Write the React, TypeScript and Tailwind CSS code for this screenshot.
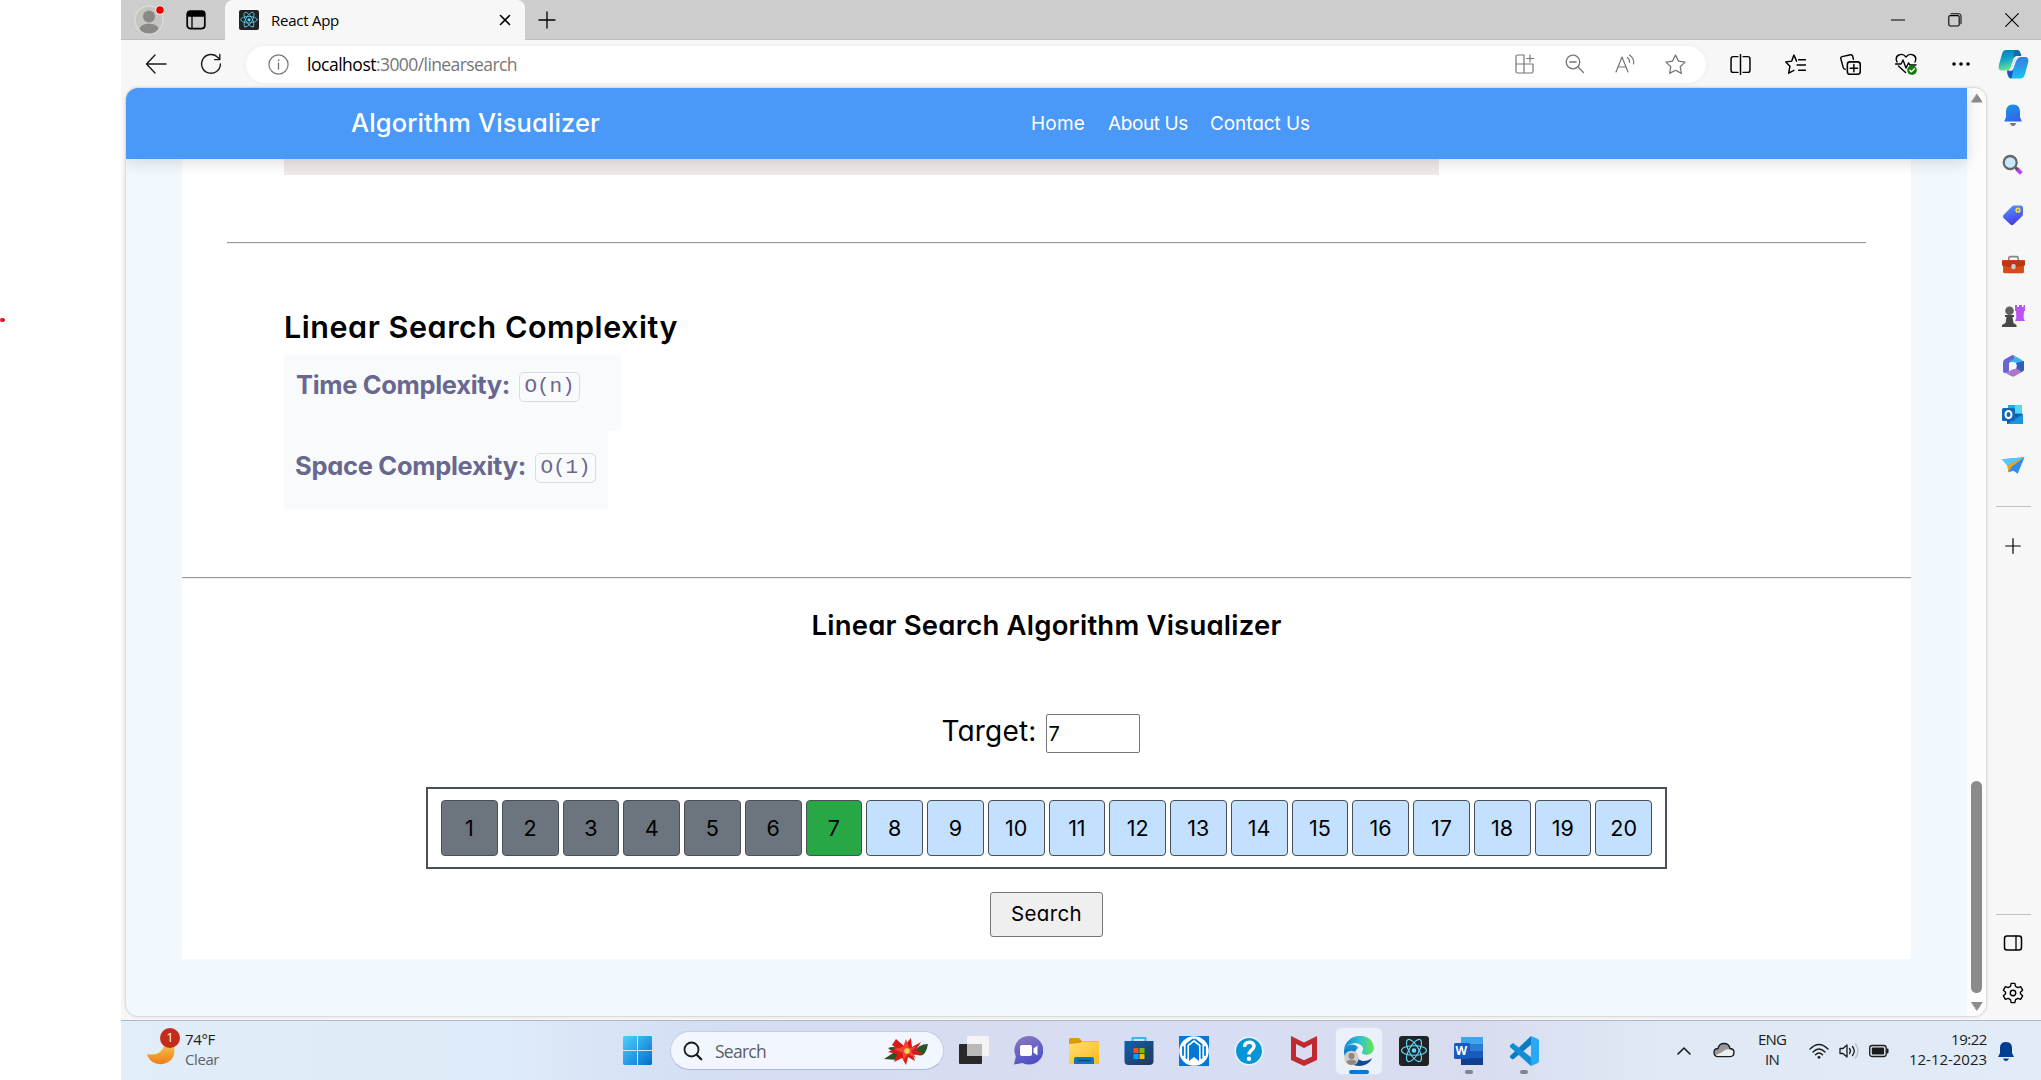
import { useLayoutEffect, useRef, type ReactNode } from "react";

/* Single line of text whose tracking is adjusted so that it fills `w` pixels. */
function Fit({ w, className = "", children }: { w: number; className?: string; children: string }) {
  const ref = useRef<HTMLSpanElement>(null);
  useLayoutEffect(() => {
    const el = ref.current;
    if (!el) return;
    el.style.letterSpacing = "0px";
    const natural = el.getBoundingClientRect().width;
    el.style.letterSpacing = `${(w - natural) / children.length}px`;
  }, [w, children]);
  return (
    <span ref={ref} className={`inline-block w-fit whitespace-pre ${className}`}>
      {children}
    </span>
  );
}

const Svg = ({ s = 20, vb = 20, className = "", children }: { s?: number; vb?: number; className?: string; children: ReactNode }) => (
  <svg width={s} height={s} viewBox={`0 0 ${vb} ${vb}`} fill="none" stroke="currentColor" strokeWidth="1.3" strokeLinecap="round" strokeLinejoin="round" className={`block shrink-0 ${className}`}>
    {children}
  </svg>
);

const Slot = ({ className, children }: { className: string; children: ReactNode }) => (
  <div className={`flex shrink-0 items-center justify-center ${className}`}>{children}</div>
);

const ReactLogo = ({ s }: { s: number }) => (
  <Svg s={s} vb={30} className="text-[#61dafb]">
    <rect width="30" height="30" rx="3" fill="#202224" stroke="none" />
    <g strokeWidth="1.1">
      <ellipse cx="15" cy="14.5" rx="12.5" ry="4.8" />
      <ellipse cx="15" cy="14.5" rx="12.5" ry="4.8" transform="rotate(60 15 14.5)" />
      <ellipse cx="15" cy="14.5" rx="12.5" ry="4.8" transform="rotate(120 15 14.5)" />
    </g>
    <circle cx="15" cy="14.5" r="2.3" fill="currentColor" stroke="none" />
  </Svg>
);

function TabStrip() {
  return (
    <div className="flex h-10 bg-[#cdcdcd] text-black shadow-[inset_0_-1px_0_#bdbdbd]">
      <div className="flex w-[104px] items-center">
        <Svg s={30} vb={30} className="ml-[13px]">
          <g stroke="none">
            <circle cx="15" cy="15" r="14" fill="#c5c4c0" stroke="#dedcd8" />
            <circle cx="15" cy="11.5" r="6" fill="#8b8985" />
            <path d="M5.5 24c1-7 18-7 19 0-4 6-15 6-19 0z" fill="#8b8985" />
            <circle cx="26" cy="5" r="4.6" fill="#fff" />
            <circle cx="26" cy="5" r="3.8" fill="#e60000" />
          </g>
        </Svg>
        <Svg s={20} className="ml-[22px]">
          <rect x="1.2" y="1.2" width="17.6" height="17.4" rx="3" strokeWidth="1.7" />
          <path d="M2 2h16v4H2z" fill="currentColor" />
          <path d="M6 6v12" />
        </Svg>
      </div>
      <div className="flex w-[300px] items-center rounded-t-lg bg-[#f7f7f7] pl-[14px]">
        <ReactLogo s={20} />
        <Fit w={68} className="ml-3 font-['Open_Sans'] text-[15px] leading-5">React App</Fit>
        <Svg s={12} vb={12} className="ml-auto mr-[14px]"><path d="M1.5 1.5l9 9m0-9l-9 9" strokeWidth="1.6" /></Svg>
      </div>
      <Svg s={18} vb={18} className="ml-[13px] mt-[11px]"><path d="M9 1v16M1 9h16" /></Svg>
      <div className="ml-auto mr-[1px] flex items-center">
        <Slot className="w-[57px]"><Svg s={14} vb={14}><path d="M0 7h14" strokeLinecap="butt" strokeWidth="1" /></Svg></Slot>
        <Slot className="w-[57px]"><Svg s={14} vb={14}><rect x=".8" y="2.6" width="10.4" height="10.4" rx="1.5" strokeWidth="1.1" /><path d="M3 .8h8q2 0 2 2v8" strokeWidth="1" /></Svg></Slot>
        <Slot className="w-[57px]"><Svg s={14} vb={14}><path d="M.7.7l12.6 12.6m0-12.6L.7 13.3" strokeWidth="1.1" /></Svg></Slot>
      </div>
    </div>
  );
}

const STAR = "M10 1l2.8 5.8 6.3.9-4.6 4.4 1.1 6.4L10 15.5l-5.6 3 1.1-6.4L.9 7.7l6.3-.9z";

function Toolbar() {
  return (
    <div className="flex h-12 items-center bg-[#f7f7f7] text-[#1b1b1b]">
      <Slot className="ml-[24px] w-[22px]"><Svg s={22} vb={22}><path d="M21 11H1.5m8.5-9l-8.5 9 8.5 9" strokeWidth="1.4" /></Svg></Slot>
      <Slot className="ml-[33px] w-[22px]"><Svg s={22} vb={22}><path d="M20.4 11A9.4 9.4 0 1 1 18 4.6l1.8 1.9M19.8 1.4v5.2h-5.2" strokeWidth="1.4" /></Svg></Slot>
      <div className="ml-[24px] flex h-[37px] w-[1460px] items-center rounded-full bg-white pl-[22px] text-[#767676] shadow-[0_0_5px_rgba(0,0,0,.06)]">
        <Svg s={21} vb={21}><circle cx="10.5" cy="10.5" r="9.6" strokeWidth="1.2" /><path d="M10.5 9v6" /><circle cx="10.5" cy="6.2" r=".6" fill="currentColor" strokeWidth=".5" /></Svg>
        <div className="ml-[18px] flex font-['Open_Sans'] text-[17.5px] leading-6">
          <Fit w={69} className="text-black">localhost</Fit>
          <Fit w={141}>:3000/linearsearch</Fit>
        </div>
        <div className="ml-auto mr-[6px] flex">
          <Slot className="w-[50px]"><Svg s={20}><path d="M1 2.5Q1 1 2.500 1H9v9H1zM1 10h8v9H2.500Q1 19 1 17.500zM9 10h9v7.500q0 1.500-1.500 1.500H9zM15 1v7m-3.500-3.500h7" strokeWidth="1.2" /></Svg></Slot>
          <Slot className="w-[50px]"><Svg s={20}><circle cx="8" cy="8" r="6.800" /><path d="M13 13l5.500 5.500M4.800 8h6.400" /></Svg></Slot>
          <Slot className="w-[50px]"><Svg s={20}><path d="M1 18L7 3l6 15M3 13h8M12.500 3.500q2.500 2 2 5M14.500 1q5 3.500 4 9" strokeWidth="1.2" /></Svg></Slot>
          <Slot className="w-[50px]"><Svg s={21}><path d={STAR} strokeWidth="1.200" /></Svg></Slot>
        </div>
      </div>
      <div className="ml-[7px] flex text-black">
        <Slot className="w-[55px]"><Svg s={21}><path d="M7.500 2.500H3q-2 0-2 2v11q0 2 2 2h4.500M12.500 2.500H17q2 0 2 2v11q0 2-2 2h-4.500M10 .500v19" strokeWidth="1.400" /></Svg></Slot>
        <Slot className="w-[55px]"><Svg s={21}><path d="M11 6.800L8.500 1 6.300 6.800l-5.600.8 4 4-1.200 6.700 5-2.800M13 5.500h6.500M11.500 10.500h8M13 15.500h6.500" strokeWidth="1.400" /></Svg></Slot>
        <Slot className="w-[55px]"><Svg s={21}><rect x="7" y="7.500" width="12.300" height="11.800" rx="2.500" strokeWidth="1.500" /><path d="M13.200 10v7M9.700 13.500h7M5 14.500q-1.500 0-2-1.800L.8 4.500Q.4 3 2 2.500L10 .800q1.500-.3 2 1.200l.8 3" strokeWidth="1.400" /></Svg></Slot>
        <Slot className="w-[55px]"><Svg s={22} vb={22}><path d="M2 9C-1 2 7-1 11 4c4-5 12-2 9 5M.500 11H6l2-4 3 8 2.500-5 1.500 2h6M3.500 13l7 6.500" strokeWidth="1.400" /><circle cx="17" cy="17.200" r="4.800" fill="#107c10" stroke="none" /><path d="M14.800 17.300l1.600 1.500 3-3" stroke="#fff" /></Svg></Slot>
        <Slot className="w-[55px]"><Svg s={20}><g fill="currentColor" stroke="none"><circle cx="3" cy="10" r="1.800" /><circle cx="10" cy="10" r="1.800" /><circle cx="17" cy="10" r="1.800" /></g></Svg></Slot>
      </div>
      <Svg s={31} vb={31} className="ml-auto mr-[12px]">
        <defs>
          <linearGradient id="cpA" x2=".3" y2="1"><stop stopColor="#0078bd" /><stop offset=".5" stopColor="#10a6c9" /><stop offset="1" stopColor="#70e28c" /></linearGradient>
          <linearGradient id="cpB" x2=".2" y2="1"><stop stopColor="#3d72df" /><stop offset="1" stopColor="#1bbcf2" /></linearGradient>
        </defs>
        <g stroke="none">
          <path d="M8 1h11q3 0 4 6h-5q-2 0-2.600 3l-3 9q-1 2.500-4 2.500H4q-4.500 0-3-6L4 5Q5 1 8 1z" fill="url(#cpA)" />
          <path d="M16 1h3.500q2.500 0 4 6h-5q-2 0-3 3z" fill="#126ea5" />
          <path d="M22.500 8H27q4.500 0 3 6l-3 11q-1 4.500-5 4.500H13q-3 0-4-6 3 0 4-3l4-10q1-2.500 5.500-2.500z" fill="url(#cpB)" />
          <path d="M9 21.500h6l-1.500 8q-3.500 0-4.500-8z" fill="#1557b5" />
          <path d="M19 8.500q3-.5 3.500-.5-3.500 1-4.500 4l-2.500 7q-1 3-4.500 3.500 2-1 3-4l3-7.500q.7-2 2-2.500z" fill="#fff" />
        </g>
      </Svg>
    </div>
  );
}

const HR = ({ className }: { className: string }) => <div className={`h-[2px] border-t border-t-[#9a9a9a] bg-[#eee] ${className}`} />;

function Complexity({ label, value, w, className }: { label: string; value: string; w: number; className: string }) {
  return (
    <div className={`flex items-start bg-[#f9fafc] text-[#68688f] ${className}`}>
      <Fit w={w} className="font-['Inter'] text-[25.5px] font-bold leading-[30px] [font-feature-settings:'cv11']">{label}</Fit>
      <div className="ml-[9px] mt-[2px] flex h-[30px] w-[61px] items-center justify-center rounded-[5px] border border-[#d3dce8] font-['Liberation_Mono'] text-[21px] leading-[28px]">
        <Fit w={50}>{value}</Fit>
      </div>
    </div>
  );
}

const VALUES = Array.from({ length: 20 }, (_, i) => i + 1);
const TARGET = 7;

function Page() {
  return (
    <div className="flex h-[928px] w-[1860px] overflow-hidden rounded-xl bg-[#f1f9ff] shadow-[0_0_3px_rgba(0,0,0,.3)]">
      <div className="flex w-[1841px] flex-col font-['Inter'] [font-feature-settings:'cv11']">
        <header className="relative flex h-[71px] shrink-0 items-start bg-[#4a98f8] text-white shadow-[0_4px_14px_rgba(0,0,0,.13)]">
          <Fit w={249} className="ml-[225px] mt-[19px] text-[25.5px] font-medium leading-8">Algorithm Visualizer</Fit>
          <nav className="ml-[431px] mt-[24px] flex text-[19px] leading-6">
            <Fit w={54}>Home</Fit>
            <Fit w={80} className="ml-[23px]">About Us</Fit>
            <Fit w={100} className="ml-[22px]">Contact Us</Fit>
          </nav>
        </header>
        <main className="mx-[56px] flex h-[800px] flex-col bg-white text-black">
          <div className="ml-[102px] h-4 w-[1155px] shrink-0 bg-[#f0e9e9]" />
          <HR className="mx-[45px] mt-[67px]" />
          <Fit w={394} className="ml-[102px] mt-[63px] text-[30.5px] font-semibold leading-[40px]">Linear Search Complexity</Fit>
          <div className="ml-[102px] mt-[8px]">
            <Complexity label="Time Complexity:" value="O(n)" w={214} className="h-[76px] w-[337px] pl-[12px] pt-[15px]" />
            <Complexity label="Space Complexity:" value="O(1)" w={231} className="h-[78px] w-[324px] pl-[11px] pt-[20px]" />
          </div>
          <HR className="mt-[68px]" />
          <div className="flex flex-col items-center">
            <Fit w={470} className="mt-[26px] text-[27.5px] font-semibold leading-[40px]">Linear Search Algorithm Visualizer</Fit>
            <div className="mr-[12px] mt-[69px] flex h-[39px] w-[198px]">
              <Fit w={95} className="text-[28px] leading-[34px]">Target:</Fit>
              <div className="ml-auto flex w-[94px] items-center rounded-[2px] border border-[#767676] pl-[2px] text-[20px]">7</div>
            </div>
            <div className="mt-[34px] flex h-[82px] w-[1241px] items-start gap-[4px] border-2 border-[#495057] px-[13px] pt-[11px]">
              {VALUES.map((n) => (
                <div
                  key={n}
                  className={`flex h-[56px] flex-1 items-center justify-center rounded-[4px] border border-[#495057] pt-px text-[21.5px] ${n < TARGET ? "bg-[#6c757d]" : n === TARGET ? "bg-[#28a745]" : "bg-[#c3e0ff]"}`}
                >
                  {n}
                </div>
              ))}
            </div>
            <button className="mt-[23px] h-[45px] w-[113px] rounded-[3px] border border-[#767676] bg-[#efefef] text-[20.5px]"><Fit w={71}>Search</Fit></button>
          </div>
        </main>
      </div>
      <div className="flex w-[19px] flex-col items-center bg-[#fcfcfc]">
        <Svg s={12} vb={12} className="mt-[4px] text-[#8b8b8b]"><path d="M6 2.500L11 10H1z" fill="currentColor" strokeWidth="1" /></Svg>
        <div className="mt-[677px] h-[212px] w-[11px] rounded-full bg-[#8b8b8b]" />
        <Svg s={12} vb={12} className="mt-[8px] text-[#8b8b8b]"><path d="M6 9L11 1.500H1z" fill="currentColor" strokeWidth="1" /></Svg>
      </div>
    </div>
  );
}

function Sidebar() {
  return (
    <aside className="flex w-[54px] flex-col items-center text-black">
      <div className="flex flex-col pt-[2px]">
        <Slot className="h-[50px]"><Svg s={22} vb={22}><defs><linearGradient id="sbBell" x2=".6" y2="1"><stop stopColor="#159be2" /><stop offset="1" stopColor="#3165ed" /></linearGradient></defs><g stroke="none"><path d="M8 19h6q-.500 3-3 3t-3-3z" fill="#777" /><path d="M11 .5c5 0 7 3.500 7 7.500v5l1.800 4.500H2.200L4 13V8C4 4 6 .5 11 .5z" fill="url(#sbBell)" /></g></Svg></Slot>
        <Slot className="h-[50px]"><Svg s={22} vb={22}><path d="M14.500 14.500l4.800 4.800" stroke="#c33cf2" strokeWidth="4" strokeLinecap="butt" /><path d="M12.500 12.500l2.500 2.500" stroke="#555" strokeWidth="2.500" /><circle cx="8.200" cy="8.500" r="6.500" fill="#c9e9fb" stroke="#686868" strokeWidth="2.300" /></Svg></Slot>
        <Slot className="h-[50px]"><Svg s={22} vb={22}><defs><linearGradient id="tag" x2=".3" y2="1"><stop stopColor="#539bff" /><stop offset="1" stopColor="#4740e8" /></linearGradient></defs><path d="M12 1.500h6.500q2.500 0 2.500 2.500v6q0 1.500-1.200 2.600L11.500 20.500q-1.500 1.300-3 0L1.500 14q-1.300-1.500 0-3L9.800 2.500Q11 1.500 12 1.500z" fill="url(#tag)" stroke="none" /><circle cx="16" cy="6.200" r="1.900" fill="#6c8bdc" stroke="#ffdc36" strokeWidth="1.500" /></Svg></Slot>
        <Slot className="h-[50px]"><Svg s={23} vb={22}><path d="M6.500 6V4q0-1.500 1.500-1.500h6q1.500 0 1.500 1.500v2" stroke="#858585" strokeWidth="1.500" /><g stroke="none"><rect x="1" y="6" width="20" height="12.500" rx="1.500" fill="#d84b18" /><path d="M0 6h22v5q-11 3-22 0z" fill="#bd3513" /><rect x="9" y="9.500" width="4" height="5" rx="1.500" fill="#c9c9c9" /></g></Svg></Slot>
        <Slot className="h-[50px]"><Svg s={23} vb={23}><g stroke="none"><path d="M13 1h2v2h2V1h3v2h1.500V1H23v6h-1l-.5 7 1.500 3H13l1.300-3L14 7h-1z" fill="#bb54f1" /><circle cx="7.500" cy="6.800" r="4.300" fill="#5f5f5f" /><path d="M3 11h9v2h-1.500l1 6 3 2v2H0v-2l3.500-2 1-6H3z" fill="#484848" /></g></Svg></Slot>
        <Slot className="h-[50px]"><Svg s={23} vb={23}><g stroke="none"><path d="M11 .8L4 4.500Q1 6 1 9v9q2 2.500 6-.5V9l6.500-4z" fill="#6a64d3" /><path d="M11 .8l8.500 5Q22 7 22 10v5l-7-1.500V9L7 7.500 13.500 4z" fill="#3bb5ea" /><path d="M22 10v5q0 2-2 3l-8 4.500q-1.500.5-4-1L2 18q3 1 5.500-1L15 13V9z" fill="#ad76cd" /><path d="M22 7v9l-2 2-6-4V9z" fill="#315fbd" /><circle cx="11.300" cy="11.800" r="3.500" fill="#f7f7f7" /></g></Svg></Slot>
        <Slot className="h-[50px]"><Svg s={22} vb={22}><g stroke="none"><path d="M6 1h14v9H6z" fill="#27a8ea" /><path d="M13 1h7v8h-7z" fill="#50d9ff" /><path d="M5 10h16v10H5z" fill="#0a5da9" /><path d="M5 20L21 10v10z" fill="#1994dd" /><rect y="4" width="13" height="13" rx="1.500" fill="#1068b7" /></g><ellipse cx="6.500" cy="10.500" rx="3" ry="3.500" stroke="#fff" strokeWidth="2" /></Svg></Slot>
        <Slot className="h-[50px]"><Svg s={23} vb={22}><g stroke="none"><path d="M0 5l21.500-2L15 19l-4-3-5 1.500V12z" fill="#2d8ced" /><path d="M0 5l21.500-2L5.500 11z" fill="#56c9fb" /><path d="M21.500 3L5 11l1 6.500 3.500-5.500z" fill="#eca11f" /></g></Svg></Slot>
      </div>
      <div className="mt-[16px] h-px w-[35px] bg-[#c0c0c0]" />
      <Svg s={16} vb={16} className="mt-[31px]"><path d="M8 .7v14.600M.7 8h14.600" strokeWidth="1.200" /></Svg>
      <div className="mt-[360px] h-px w-[35px] bg-[#c0c0c0]" />
      <Svg s={20} className="mt-[18px]"><rect x="1.500" y="3" width="17" height="14" rx="2.500" strokeWidth="1.500" /><path d="M13 3v14" /></Svg>
      <Svg s={22} vb={24} className="mt-[29px]">
        <path d="M10 1.500h4l.8 3.200 2.500 1.400 3-1 2.200 3.800-2.400 2.200v1.800l2.400 2.200-2.200 3.800-3-1-2.500 1.400-.8 3.200h-4l-.8-3.200-2.500-1.400-3 1-2.200-3.800 2.400-2.200v-1.800L1.500 8.900l2.200-3.800 3 1 2.500-1.400z" strokeWidth="1.500" />
        <circle cx="12" cy="12" r="3" strokeWidth="1.500" />
      </Svg>
    </aside>
  );
}

const Pin = ({ children, dot = "" }: { children: ReactNode; dot?: string }) => (
  <div className="relative flex h-full w-[55px] shrink-0 items-center justify-center">
    {children}
    {dot && <span className={`absolute bottom-[6px] h-1 rounded-full ${dot}`} />}
  </div>
);

function Taskbar() {
  return (
    <footer className="flex h-[60px] items-center border-t border-[#b1b7c3] bg-[linear-gradient(90deg,#e1edf8,#deebf8_20%,#d4def5_30%,#d7dcf0_45%,#d7def4_55%,#d8dcee_70%,#dfe9f6_80%,#e1ecf8)] text-[#1b1b1b]">
      <div className="flex w-[502px] items-center">
        <div className="relative ml-[26px] h-[40px] w-[34px]">
          <Svg s={30} vb={30} className="mt-[9px]"><defs><linearGradient id="moon" x2="0" y2="1"><stop stopColor="#f6c548" /><stop offset="1" stopColor="#ee7d1d" /></linearGradient></defs><path d="M0 14q14 3 18-10 10-2 9.500 7C27 27 4 29 0 14z" fill="url(#moon)" stroke="none" /></Svg>
          <span className="absolute left-[13px] top-[-3px] flex size-5 items-center justify-center rounded-full bg-[#c42b1c] font-['Open_Sans'] text-[13px] text-white">1</span>
        </div>
        <div className="ml-[4px] flex flex-col pb-[4px] font-['Open_Sans'] text-[15px] leading-[20px]">
          <Fit w={30}>74°F</Fit>
          <Fit w={34} className="text-[#5d6269]">Clear</Fit>
        </div>
      </div>
      <Svg s={29} vb={29}><defs><linearGradient id="win" gradientUnits="userSpaceOnUse" x1="0" y1="0" x2="29" y2="29"><stop stopColor="#4fd0fb" /><stop offset="1" stopColor="#006fce" /></linearGradient></defs><path d="M1 0h13v14H0V1zM15 0h13l1 1v13H15zM0 15h14v14H1l-1-1zM15 15h14v13l-1 1H15z" fill="url(#win)" stroke="none" /></Svg>
      <div className="ml-[18px] flex h-[39px] w-[274px] items-center rounded-full border border-[#c4cde2] border-b-[#aeb8ce] bg-[#f2f6fe] pl-[12px]">
        <Svg s={20}><circle cx="8.500" cy="8.500" r="7" strokeWidth="1.800" /><path d="M13.700 13.700l4.500 4.500" strokeWidth="2.300" /></Svg>
        <Fit w={51} className="ml-[12px] font-['Open_Sans'] text-[17.5px] leading-6 text-[#5c5f66]">Search</Fit>
        <svg width="44" height="28" viewBox="0 0 44 28" className="ml-auto mr-[15px] block">
          <path d="M0 22l12-8 10 3-8 6zM4 11q8-3 14 3-8 3-14-3zM44 7q-10 0-14 9 11 8 14-9z" fill="#2c5228" />
          <path d="M12 2l8 7 7-8 1 9 9-5-5 8 7 4-10 1 2 6-7-4-2 8-4-7-8 4 3-8-9-2 8-4-4-3z" fill="#d51c18" />
          <path d="M22 2l3 9 8-2-6 5 5 7-8-4-5 7v-8l-9-4 9-2z" fill="#fa4436" />
          <circle cx="23" cy="14" r="2.800" fill="#e7dc4c" />
        </svg>
      </div>
      <div className="ml-[2px] flex h-full">
        <Pin><Svg s={30} vb={30}><g stroke="none"><rect y="8" width="23" height="20" rx="1" fill="#292929" /><rect x="8" y="0" width="22" height="20" rx="1" fill="#f4f4f4" /><path d="M8 8h15v12H8z" fill="#b9b9b9" /></g></Svg></Pin>
        <Pin><Svg s={29} vb={29}><defs><linearGradient id="chat" x2=".4" y2="1"><stop stopColor="#8e7bbd" /><stop offset="1" stopColor="#4f50c9" /></linearGradient></defs><g stroke="none"><path d="M14.500 0a14.300 14.300 0 1 1-6 27L0 28.500l1.800-8A14.300 14.300 0 0 1 14.500 0z" fill="url(#chat)" /><rect x="6" y="9" width="12" height="11" rx="2" fill="#fff" /><path d="M19.500 12.500l4-3v10l-4-3z" fill="#fff" /></g></Svg></Pin>
        <Pin><Svg s={30} vb={30}><defs><linearGradient id="fold" x2="1" y2="1"><stop stopColor="#ffdf75" /><stop offset="1" stopColor="#f9b91f" /></linearGradient></defs><g stroke="none"><path d="M0 3.500Q0 2 1.500 2H10l3 3h15.500Q30 5 30 7v5H0z" fill="#dc9b05" /><path d="M0 8l11-1 2-1.500h17V28H0z" fill="url(#fold)" /><path d="M5 28v-5q0-2 2-2h16q2 0 2 2v5z" fill="#1273c3" /></g><path d="M9 24.500h12" stroke="#07477f" /></Svg></Pin>
        <Pin><Svg s={30} vb={30}><defs><linearGradient id="store" x2="1" y2="1"><stop stopColor="#0c62b3" /><stop offset="1" stopColor="#243756" /></linearGradient></defs><path d="M8.500 6V2h13v4" stroke="#35b8ee" strokeWidth="2" /><g stroke="none"><path d="M.5 5h29v20q0 4-4 4h-21q-4 0-4-4z" fill="url(#store)" /><path d="M9.500 12H14.500v5h-5z" fill="#f25022" /><path d="M15.500 12h5v5h-5z" fill="#7fba00" /><path d="M9.500 18h5v5h-5z" fill="#00a4ef" /><path d="M15.500 18h5v5h-5z" fill="#ffb900" /></g></Svg></Pin>
        <Pin><Svg s={30} vb={30}><g stroke="none"><path d="M0 0h30v30H0z" fill="#0078d4" /><circle cx="15" cy="15" r="14.800" fill="#fff" /><path d="M10 10l5-4 5 4v15l-5-4-5 4z" fill="#0078d4" /></g><path d="M7.500 22V8.500L14 3.500M22.500 22V8.500L16 3.500M4 19V11M26 19v-8" stroke="#0078d4" strokeWidth="1.800" /></Svg></Pin>
        <Pin><Svg s={30} vb={30}><circle cx="15" cy="15" r="13.700" fill="#0696d7" stroke="#e8f5fc" strokeWidth="1.500" /><path d="M10.500 11c0-6.500 9.500-6 9.500-1 0 4-5 4-5 8.500" stroke="#fff" strokeWidth="3.500" strokeLinecap="butt" /><circle cx="15" cy="22.700" r="2.200" fill="#fff" stroke="none" /></Svg></Pin>
        <Pin><Svg s={30} vb={30}><path d="M2 0l13 6.500L28 0v24l-13 6-13-6zM7 8v12.500l8 3.700 8-3.700V8l-8 4z" fill="#c02b30" fillRule="evenodd" stroke="none" /></Svg></Pin>
        <Pin dot="w-5 bg-[#0078d4]">
          <Slot className="h-[48px] w-[48px] rounded-md border border-[#dce1ef] bg-[#ecf0fb]">
            <Svg s={30} vb={30}><defs><linearGradient id="edA" x2="1"><stop stopColor="#1687cc" /><stop offset=".5" stopColor="#2cc1d5" /><stop offset="1" stopColor="#69e64b" /></linearGradient><linearGradient id="edB" x2="0" y2="1"><stop stopColor="#1592dc" /><stop offset="1" stopColor="#0c5dab" /></linearGradient></defs><g stroke="none"><path d="M0 14C2-4 29-5 30 12c0 6-7 8-11 6-3-1.500 1-3 0-6-2-6-14-7-19 2z" fill="url(#edA)" /><path d="M0 14c3-7 12-7 14-2-6 4-2 15 8 14 3 0 4-2 6-3-8 12-29 8-28-9z" fill="url(#edB)" /><path d="M12 18c1 8 10 9 16 4-4 8-13 9-16 6-3-4-2-8 0-10z" fill="#104c93" /><circle cx="7.500" cy="22" r="7.300" fill="#d0cdca" /><circle cx="7.500" cy="20" r="3.100" fill="#8d8883" /><path d="M2.500 26c1-3.500 9-3.500 10 0-2 4-8 4-10 0z" fill="#8d8883" /></g></Svg>
          </Slot>
        </Pin>
        <Pin><ReactLogo s={30} /></Pin>
        <Pin dot="w-2 bg-[#82858e]">
          <div className="relative">
            <Svg s={30} vb={30}><g stroke="none"><path d="M7 1h22v7H7z" fill="#41a5ee" /><path d="M7 8h22v7H7z" fill="#2b7cd3" /><path d="M7 15h22v7H7z" fill="#185abd" /><path d="M7 22h22v7H7z" fill="#103f91" /><rect y="7" width="16" height="16" rx="1.500" fill="#185abd" /></g></Svg>
            <span className="absolute left-[2px] top-[7px] font-['Open_Sans'] text-[12px] font-bold leading-4 text-white">W</span>
          </div>
        </Pin>
        <Pin dot="w-2 bg-[#82858e]"><Svg s={30} vb={30}><g stroke="none"><path d="M22 0L1.500 19.500q-1.500 1.500.5 3L4 23.500 23 8z" fill="#087bc2" /><path d="M22 30L1.500 11.500q-1.500-1.500.5-3L4 7l19 15z" fill="#0f8ed5" /><path d="M22 0l7 3q1 .5 1 2v20q0 1.500-1 2l-7 3V0z" fill="#2aa8f3" /></g></Svg></Pin>
      </div>
      <div className="ml-auto flex items-center">
        <Svg s={14} vb={14}><path d="M1 10l6-6 6 6" strokeWidth="1.600" /></Svg>
        <Svg s={22} vb={22} className="ml-[22px] -mt-[2px]"><path d="M5 17.500Q1 17.500 1 13.500 1 9.500 5 9.500 6 4.500 11 4.500 16 4.500 17 9.500 21 9.500 21 13.500 21 17.500 17 17.500z" fill="#999" /><path d="M3 16q7-3 9-5 4-2 8 1 .5 5-3 5H5q-1.500 0-2-1z" fill="#eee" stroke="none" /></Svg>
        <div className="ml-[22px] flex w-[30px] flex-col items-center pb-[4px] font-['Open_Sans'] text-[15px] leading-[20px]"><Fit w={28}>ENG</Fit><Fit w={14}>IN</Fit></div>
        <Svg s={20} className="ml-[22px]"><path d="M1 8q9-9 18 0M4 11q6-6 12 0M6.500 13.700q3.500-3.500 7 0" strokeWidth="1.400" /><circle cx="10" cy="16.300" r="1.400" fill="currentColor" stroke="none" /></Svg>
        <Svg s={20} className="ml-[10px]"><path d="M1 7.500h3l4-3.500v12l-4-3.500H1zM10.500 7.500q2 2.500 0 5M13.500 5.500q3.500 4.500 0 9" /><path d="M16.500 3q5 7 0 14" stroke="#b6bdc6" /></Svg>
        <Svg s={20} className="ml-[10px]"><rect x=".7" y="4.500" width="16.500" height="11" rx="2.500" /><rect x="2.800" y="6.500" width="12.300" height="7" rx="1" fill="currentColor" stroke="none" /><path d="M18.500 8.500v3" strokeWidth="2" /></Svg>
        <div className="ml-[20px] flex w-[78px] flex-col pb-[4px] font-['Open_Sans'] text-[15px] leading-[20px]"><Fit w={36} className="ml-auto">19:22</Fit><Fit w={78}>12-12-2023</Fit></div>
        <Svg s={20} className="ml-[9px] mr-[25px] text-[#003e92]"><path d="M10 1c5 0 6 3.500 6 6v5l2 4H2l2-4V7c0-2.500 1-6 6-6zM7 17.500h6q-1 2.500-3 2.500t-3-2.500z" fill="currentColor" stroke="none" /></Svg>
      </div>
    </footer>
  );
}

export default function App() {
  return (
    <div className="flex h-[1080px] w-[2041px] overflow-hidden bg-white">
      <div className="w-[121px] shrink-0 pt-[318px]"><div className="h-[4px] w-[5px] rounded-full bg-[#e81123]" /></div>
      <div className="flex w-[1920px] flex-col bg-[#f7f7f7]">
        <TabStrip />
        <Toolbar />
        <div className="flex h-[932px] pl-[5px]">
          <Page />
          <Sidebar />
        </div>
        <Taskbar />
      </div>
    </div>
  );
}
